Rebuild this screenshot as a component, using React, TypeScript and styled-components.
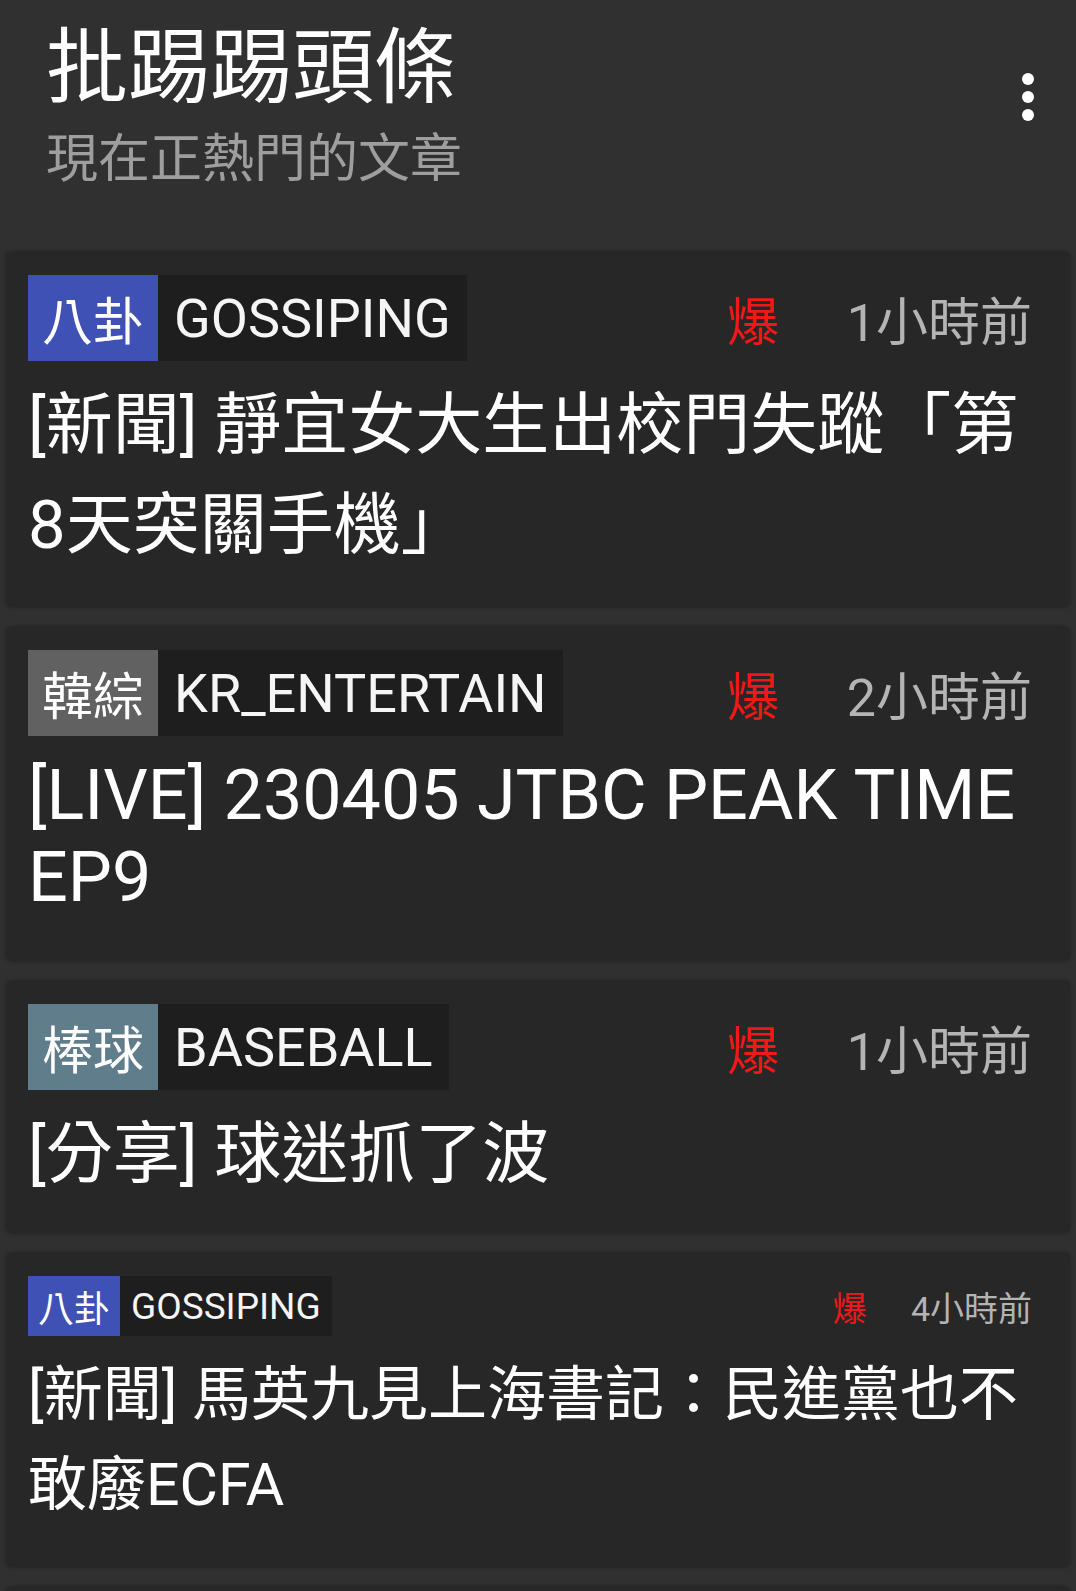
import React from "react";
import styled, { createGlobalStyle } from "styled-components";

const GlobalStyle = createGlobalStyle`
  html, body {
    margin: 0;
    padding: 0;
    background: #303030;
  }
  body {
    font-family: Roboto, "Noto Sans CJK TC", sans-serif;
    color: #ffffff;
  }
  * { box-sizing: border-box; }
`;

const Page = styled.div`
  width: 1076px;
  height: 1591px;
  background: #303030;
  overflow: hidden;
`;

const Header = styled.header`
  display: flex;
  justify-content: space-between;
  align-items: flex-start;
  height: 251px;
  padding: 27px 12px 0 46px;
`;

const HeadText = styled.div`
  display: flex;
  flex-direction: column;
`;

const AppTitle = styled.h1`
  margin: 0;
  font-size: 82px;
  line-height: 82px;
  font-weight: 400;
  color: #ffffff;
`;

const AppSubtitle = styled.div`
  margin-top: 25px;
  font-size: 52px;
  line-height: 52px;
  color: #9e9e9e;
`;

const MenuButton = styled.button`
  margin-top: 34px;
  width: 72px;
  height: 72px;
  padding: 0;
  border: none;
  background: transparent;
  display: flex;
  align-items: center;
  justify-content: center;
  color: #ffffff;
`;

const List = styled.main`
  display: flex;
  flex-direction: column;
  gap: 20px;
  padding: 0 6px;
`;

const Card = styled.article<{ $pb: number }>`
  background: #272727;
  border-radius: 6px;
  box-shadow: 0 1px 4px rgba(0, 0, 0, 0.35);
  padding: 24px 38px ${(p) => p.$pb}px 22px;
`;

const PlaceholderCard = styled.div`
  height: 160px;
  background: #272727;
  border-radius: 6px;
  box-shadow: 0 1px 4px rgba(0, 0, 0, 0.35);
`;

const MetaRow = styled.div`
  display: flex;
  align-items: center;
  justify-content: space-between;
`;

const Badge = styled.div<{ $h: number }>`
  display: inline-flex;
  align-items: stretch;
  height: ${(p) => p.$h}px;
  background: #1e1e1e;
`;

const Category = styled.span<{ $color: string; $size: number }>`
  display: flex;
  align-items: center;
  background: ${(p) => p.$color};
  color: #ffffff;
  font-size: ${(p) => p.$size}px;
  padding: 0 ${(p) => Math.round(p.$size * 0.27)}px;
  white-space: nowrap;
`;

const Board = styled.span<{ $size: number }>`
  display: flex;
  align-items: center;
  color: #f5f5f5;
  font-size: ${(p) => p.$size}px;
  padding: 0 ${(p) => Math.round(p.$size * 0.29)}px 0 ${(p) => Math.round(p.$size * 0.3)}px;
  white-space: nowrap;
`;

const Info = styled.div<{ $size: number }>`
  display: flex;
  align-items: center;
  font-size: ${(p) => p.$size}px;
  white-space: nowrap;
`;

const Hot = styled.span`
  color: #f21818;
`;

const Time = styled.span`
  color: #b4b4b4;
  margin-left: 1.3em;
`;

const PostTitle = styled.h2<{ $size: number; $lh: number; $mt: number; $mb: number }>`
  margin: ${(p) => p.$mt}px 0 ${(p) => p.$mb}px;
  font-weight: 400;
  font-size: ${(p) => p.$size}px;
  line-height: ${(p) => p.$lh}px;
  color: #ffffff;
`;

type Post = {
  cat: string;
  color: string;
  board: string;
  time: string;
  title: string;
  titleSize: number;
  lh: number;
  mt: number;
  mb: number;
  pb: number;
  small?: boolean;
};

const posts: Post[] = [
  {
    cat: "八卦",
    color: "#3f51b5",
    board: "GOSSIPING",
    time: "1小時前",
    title: "[新聞] 靜宜女大生出校門失蹤「第8天突關手機」",
    titleSize: 67,
    lh: 100,
    mt: 14,
    mb: 0,
    pb: 31,
  },
  {
    cat: "韓綜",
    color: "#616161",
    board: "KR_ENTERTAIN",
    time: "2小時前",
    title: "[LIVE] 230405 JTBC PEAK TIME EP9",
    titleSize: 70,
    lh: 82,
    mt: 18,
    mb: 11,
    pb: 31,
  },
  {
    cat: "棒球",
    color: "#607d8b",
    board: "BASEBALL",
    time: "1小時前",
    title: "[分享] 球迷抓了波",
    titleSize: 67,
    lh: 100,
    mt: 14,
    mb: 0,
    pb: 28,
  },
  {
    cat: "八卦",
    color: "#3f51b5",
    board: "GOSSIPING",
    time: "4小時前",
    title: "[新聞] 馬英九見上海書記：民進黨也不敢廢ECFA",
    titleSize: 59,
    lh: 90,
    mt: 14,
    mb: 0,
    pb: 36,
    small: true,
  },
];

const MoreIcon = () => (
  <svg width="72" height="72" viewBox="0 0 24 24" fill="currentColor" aria-hidden="true">
    <circle cx="12" cy="6" r="2" />
    <circle cx="12" cy="12" r="2" />
    <circle cx="12" cy="18" r="2" />
  </svg>
);

export default function App() {
  return (
    <>
      <GlobalStyle />
      <Page>
        <Header>
          <HeadText>
            <AppTitle>批踢踢頭條</AppTitle>
            <AppSubtitle>現在正熱門的文章</AppSubtitle>
          </HeadText>
          <MenuButton aria-label="more">
            <MoreIcon />
          </MenuButton>
        </Header>
        <List>
          {posts.map((p, i) => {
            const catSize = p.small ? 36 : 51;
            const boardSize = p.small ? 37 : 54;
            const infoSize = p.small ? 34 : 52;
            return (
              <Card key={i} $pb={p.pb}>
                <MetaRow>
                  <Badge $h={p.small ? 60 : 86}>
                    <Category $color={p.color} $size={catSize}>
                      {p.cat}
                    </Category>
                    <Board $size={boardSize}>{p.board}</Board>
                  </Badge>
                  <Info $size={infoSize}>
                    <Hot>爆</Hot>
                    <Time>{p.time}</Time>
                  </Info>
                </MetaRow>
                <PostTitle $size={p.titleSize} $lh={p.lh} $mt={p.mt} $mb={p.mb}>
                  {p.title}
                </PostTitle>
              </Card>
            );
          })}
          <PlaceholderCard />
        </List>
      </Page>
    </>
  );
}
